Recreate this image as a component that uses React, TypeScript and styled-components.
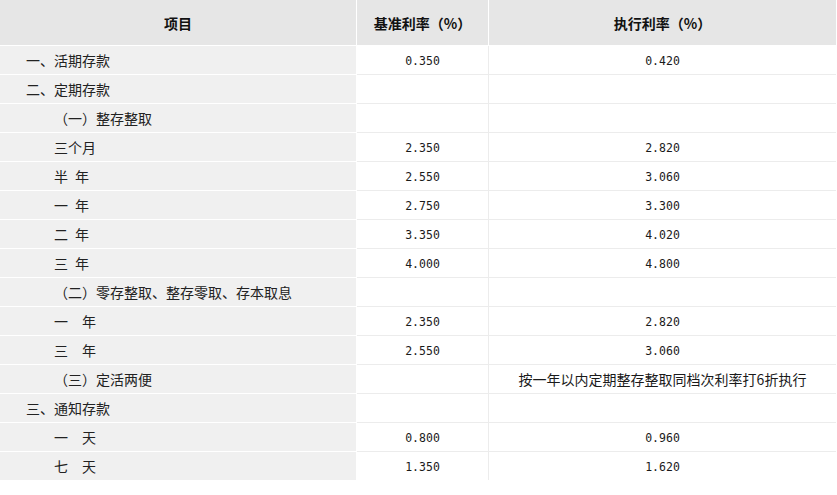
import React from "react";
import styled, { createGlobalStyle } from "styled-components";

const GlobalStyle = createGlobalStyle`
  html, body {
    margin: 0;
    padding: 0;
    background: #ffffff;
  }
  body {
    font-family: "Noto Sans CJK SC", "Noto Sans", sans-serif;
    font-size: 14px;
    color: #222;
  }
`;

const Table = styled.div`
  display: grid;
  grid-template-columns: 356px 131px 347px;
  column-gap: 1px;
  row-gap: 1px;
  width: 837px;
  background: #ffffff;
`;

const HeadCell = styled.div`
  height: 45px;
  background: #e6e6e6;
  display: flex;
  align-items: center;
  justify-content: center;
  font-weight: bold;
  font-size: 14px;
  color: #111;
`;

const ItemCell = styled.div<{ $level: number }>`
  height: 28px;
  background: #f0f0f0;
  display: flex;
  align-items: center;
  padding-left: ${(p) => (p.$level === 1 ? 26 : 54)}px;
  white-space: pre;
  font-size: 14px;
  line-height: 1;
  color: #222;
`;

const RateCell = styled.div<{ $divider?: boolean; $note?: boolean }>`
  height: 28px;
  box-sizing: border-box;
  padding-top: ${(p) => (p.$note ? 0 : 3)}px;
  background: #ffffff;
  display: flex;
  align-items: center;
  justify-content: center;
  box-shadow: 0 1px 0 #ececec${(p) => (p.$divider ? ", 1px 0 0 #ececec, 1px 1px 0 #ececec" : "")};
  font-family: ${(p) =>
    p.$note
      ? `"Noto Sans CJK SC", "Noto Sans", sans-serif`
      : `"DejaVu Sans Mono", "Liberation Mono", monospace`};
  font-size: ${(p) => (p.$note ? 14 : 11.5)}px;
  line-height: 1;
  color: #1a1a1a;
`;

const Gap = styled.span<{ $w: number }>`
  display: inline-block;
  width: ${(p) => p.$w}px;
`;

type Row = {
  label: React.ReactNode;
  level: number;
  base?: string;
  exec?: string;
  note?: boolean;
};

const rows: Row[] = [
  { label: "一、活期存款", level: 1, base: "0.350", exec: "0.420" },
  { label: "二、定期存款", level: 1 },
  { label: "（一）整存整取", level: 2 },
  { label: "三个月", level: 2, base: "2.350", exec: "2.820" },
  { label: <>半<Gap $w={7} />年</>, level: 2, base: "2.550", exec: "3.060" },
  { label: <>一<Gap $w={7} />年</>, level: 2, base: "2.750", exec: "3.300" },
  { label: <>二<Gap $w={7} />年</>, level: 2, base: "3.350", exec: "4.020" },
  { label: <>三<Gap $w={7} />年</>, level: 2, base: "4.000", exec: "4.800" },
  { label: "（二）零存整取、整存零取、存本取息", level: 2 },
  { label: <>一<Gap $w={14} />年</>, level: 2, base: "2.350", exec: "2.820" },
  { label: <>三<Gap $w={14} />年</>, level: 2, base: "2.550", exec: "3.060" },
  { label: "（三）定活两便", level: 2, exec: "按一年以内定期整存整取同档次利率打6折执行", note: true },
  { label: "三、通知存款", level: 1 },
  { label: <>一<Gap $w={14} />天</>, level: 2, base: "0.800", exec: "0.960" },
  { label: <>七<Gap $w={14} />天</>, level: 2, base: "1.350", exec: "1.620" },
];

export default function App() {
  return (
    <>
      <GlobalStyle />
      <Table>
        <HeadCell>项目</HeadCell>
        <HeadCell>基准利率（%）</HeadCell>
        <HeadCell>执行利率（%）</HeadCell>
        {rows.map((r, i) => (
          <React.Fragment key={i}>
            <ItemCell $level={r.level}>{r.label}</ItemCell>
            <RateCell $divider>{r.base ?? ""}</RateCell>
            <RateCell $note={r.note}>{r.exec ?? ""}</RateCell>
          </React.Fragment>
        ))}
      </Table>
    </>
  );
}
